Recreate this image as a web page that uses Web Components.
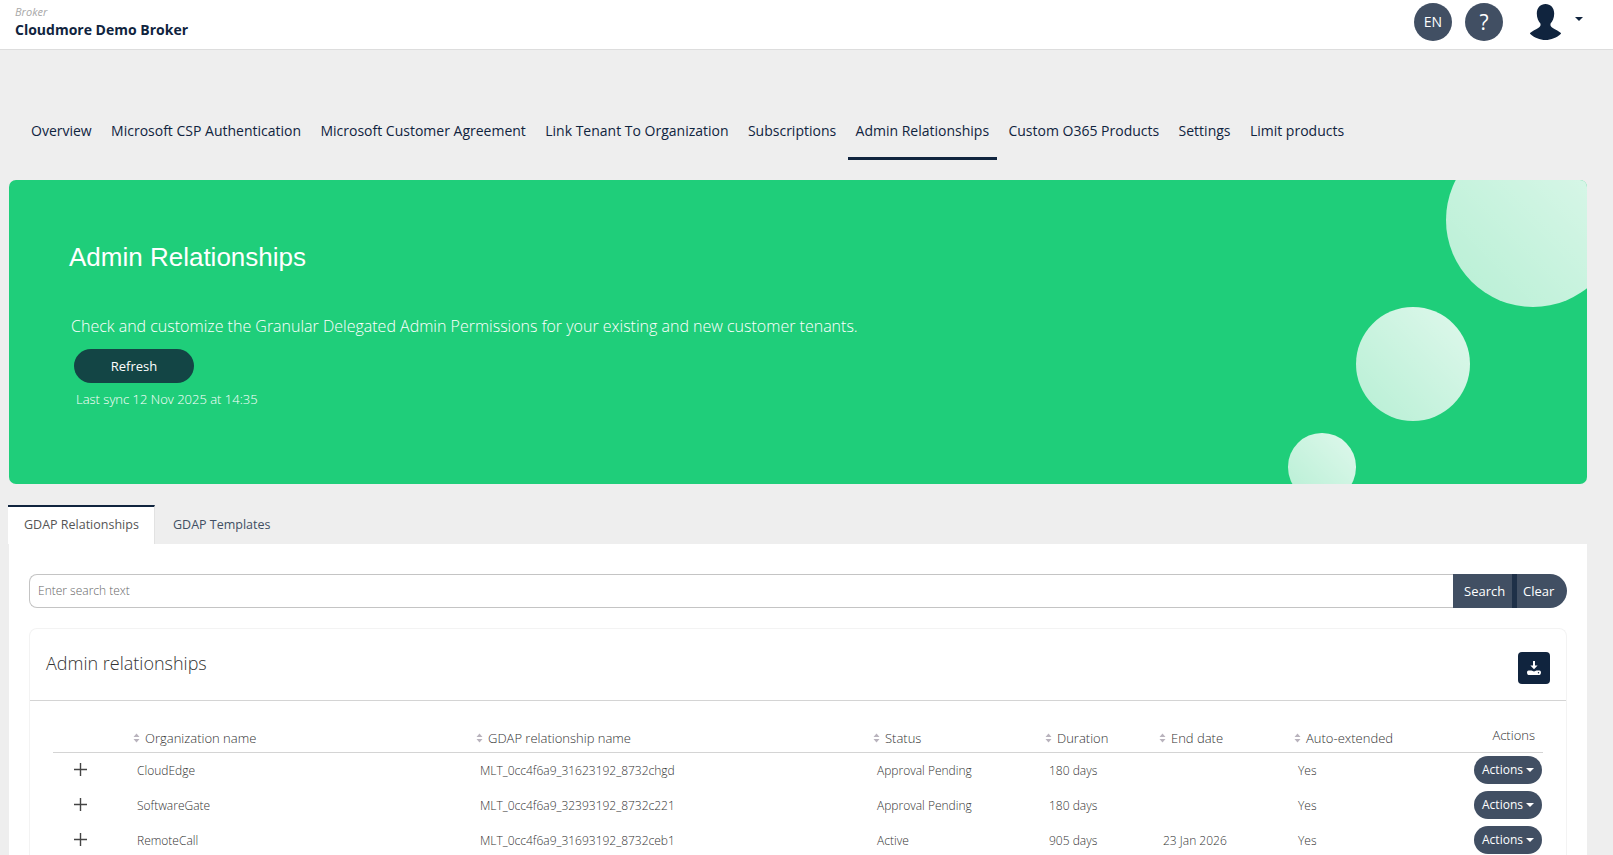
<!DOCTYPE html>
<html lang="en"><head><meta charset="utf-8"><title>Admin Relationships</title>
<style>
html,body{margin:0;padding:0;height:855px;overflow:hidden;background:#eee;font-family:"Open Sans","Liberation Sans",sans-serif;color:#10243e}
</style></head><body>
<app-header></app-header>
<main-nav></main-nav>
<hero-banner></hero-banner>
<sub-tabs></sub-tabs>
<tab-panel>
  <search-bar></search-bar>
  <data-card>
    <relationship-row head></relationship-row>
    <relationship-row org="CloudEdge" rel="MLT_0cc4f6a9_31623192_8732chgd" status="Approval Pending" dur="180 days" end="" auto="Yes"></relationship-row>
    <relationship-row org="SoftwareGate" rel="MLT_0cc4f6a9_32393192_8732c221" status="Approval Pending" dur="180 days" end="" auto="Yes"></relationship-row>
    <relationship-row org="RemoteCall" rel="MLT_0cc4f6a9_31693192_8732ceb1" status="Active" dur="905 days" end="23 Jan 2026" auto="Yes"></relationship-row>
  </data-card>
</tab-panel>
<script>
function def(name, html){
  customElements.define(name, class extends HTMLElement{
    connectedCallback(){
      if(this.shadowRoot) return;
      const r=this.attachShadow({mode:'open'});
      r.innerHTML=typeof html==='function'?html(this):html;
    }
  });
}
def('app-header',`<style>
:host{display:flex;height:49px;background:#fff;border-bottom:1px solid #ddd;align-items:stretch;justify-content:space-between;padding:0 0 0 15px}
.b{display:flex;flex-direction:column;padding-top:6px}
.s{font-size:11px;line-height:12px;font-style:italic;color:#a8a8a8;font-weight:400}
.t{font-size:14px;line-height:19px;font-weight:700;color:#10243e;margin-top:2px}
.r{display:flex;align-items:center;padding:0 30px 7px 0;margin-top:1px}
.c{width:38px;height:38px;border-radius:50%;background:#414f63;color:#fff;display:flex;align-items:center;justify-content:center;font-size:14px;margin-right:13px}
.q{font-size:21px;font-weight:500;margin-right:27px}
svg{display:block}
.caret{width:0;height:0;border:4px solid transparent;border-top:4px solid #10243e;border-bottom:0;margin:0 0 6px 14px}
</style>
<div class="b"><span class="s">Broker</span><span class="t">Cloudmore Demo Broker</span></div>
<div class="r"><span class="c">EN</span><span class="c q">?</span>
<svg width="31" height="36" viewBox="0 0 31 36"><path fill="#10243e" d="M15.500 0c5 0 8.700 3.800 8.700 9.500 0 4.500-1.800 8-3.600 10-.5 2 .2 3.200 2.200 4.400 2.800 1.700 5.500 2.800 7.800 4.800.5.400.5.900.1 1.300C27 33.500 21 36 15.500 36S4 33.500.3 30c-.4-.4-.4-.9.1-1.300 2.300-2 5-3.100 7.800-4.800 2-1.200 2.700-2.400 2.200-4.400-1.800-2-3.600-5.500-3.600-10C6.800 3.800 10.500 0 15.500 0z"/></svg>
<span class="caret"></span></div>`);
const navs=['Overview','Microsoft CSP Authentication','Microsoft Customer Agreement','Link Tenant To Organization','Subscriptions','Admin Relationships','Custom O365 Products','Settings','Limit products'];
def('main-nav',`<style>
:host{display:flex;padding:0 0 0 23px;margin-top:60px;gap:3.4px;height:50px}
a{display:block;padding:0 8px;font-size:14px;line-height:42px;color:#10243e;box-sizing:border-box;height:50px;white-space:nowrap}
a.on{border-bottom:3px solid #10243e}
</style>`+navs.map(n=>`<a class="${n==='Admin Relationships'?'on':''}">${n}</a>`).join(''));
def('hero-banner',`<style>
:host{display:block;position:relative;overflow:hidden;margin:20px 26px 0 9px;height:304px;background:#1fce7a;border-radius:7px;color:#fff}
.in{display:flex;flex-direction:column;align-items:flex-start;padding:0 0 0 60px}
h1{margin:61px 0 0;font:400 26px/32px "Liberation Sans",Arial,sans-serif}
p{margin:42px 0 0 2px;font-size:16px;line-height:22px;font-weight:300}
button{margin:12px 0 0 5px;width:120px;height:34px;border:0;border-radius:17px;background:#134545;color:#fff;font:400 13px "Open Sans",sans-serif}
small{display:block;margin:7px 0 0 7px;font-size:13px;line-height:18px;font-weight:300}
i{position:absolute;border-radius:50%;background:linear-gradient(to top right,rgba(255,255,255,.68),rgba(255,255,255,.86))}
</style>
<i style="left:1437px;top:-47px;width:174px;height:174px"></i>
<i style="left:1346.500px;top:127px;width:114px;height:114px"></i>
<i style="left:1279px;top:253px;width:67.500px;height:67.500px"></i>
<div class="in"><h1>Admin Relationships</h1>
<p>Check and customize the Granular Delegated Admin Permissions for your existing and new customer tenants.</p>
<button>Refresh</button><small>Last sync 12 Nov 2025 at 14:35</small></div>`);
def('sub-tabs',`<style>
:host{display:flex;margin:21px 0 0 8px;height:39px}
a{display:flex;align-items:center;font-size:12.500px;color:#414f63;padding:0 15px 0 18px}
a.on{background:#fff;border-top:2px solid #10243e;width:147px;box-sizing:border-box;padding:0 0 2px 16px;color:#555;border-right:1px solid #e2e2e2}
</style><a class="on">GDAP Relationships</a><a>GDAP Templates</a>`);
def('tab-panel',`<style>
:host{display:block;margin:0 26px 0 9px;background:#fff;padding:30px 20px 0;height:311px;box-sizing:border-box;overflow:hidden}
</style><slot></slot>`);
def('search-bar',`<style>
:host{display:flex;height:34px}
.i{flex:1;border:1px solid #c4c4c4;border-right:0;border-radius:8px 0 0 8px;box-sizing:border-box;display:flex;align-items:center;padding:0 0 2px 8px;font-size:12px;color:#666;font-weight:300}
.b{display:flex;align-items:center;background:#414f63;color:#fff;font-size:13px}
.s{width:59px;padding-left:11px;box-sizing:border-box}
.d{width:5px;height:100%;background:#1e3048}
.c{width:50px;padding-left:6px;box-sizing:border-box;border-radius:0 17px 17px 0}
</style><div class="i">Enter search text</div><div class="b s">Search</div><div class="d"></div><div class="b c">Clear</div>`);
def('data-card',`<style>
:host{display:block;margin-top:20px;border:1px solid #f3f3f3;border-bottom:0;border-radius:8px 8px 0 0;box-sizing:border-box}
.h{display:flex;align-items:center;justify-content:space-between;height:71px;padding:0 16px;border-bottom:1px solid #d4d4d4}
h2{margin:0 0 4px;font-size:18px;font-weight:300;color:#333}
.d{width:32px;height:32px;border-radius:4px;background:#10243e;display:flex;align-items:center;justify-content:center;margin-top:6px}
.t{padding:0 22px 0 23px;margin-top:16px}
</style><div class="h"><h2>Admin relationships</h2><span class="d"><svg width="14" height="14" viewBox="0 0 14 14"><path fill="#fff" d="M6 0h2v4.500h2.600L7 8.300 3.400 4.500H6z"/><path fill="#fff" fill-rule="evenodd" d="M1.500 9.500h3L7 10.500l2.500-1h3c.8 0 1.500.9 1.500 2s-.7 2.500-1.500 2.500h-11C.7 14 0 12.600 0 11.500s.7-2 1.500-2zM11.500 11a.7.7 0 1 0 0 1.400.7.7 0 0 0 0-1.400z"/></svg></span></div><div class="t"><slot></slot></div>`);
const sort=`<svg width="7" height="10" viewBox="0 0 7 10"><path fill="#b9b3bd" d="M3.500 0.500l3 3.500H.5zM3.500 9.500L.5 6h6z"/></svg>`;
const cols=`display:grid;grid-template-columns:76px 343px 397px 172px 114px 135px 140px 113px;`;
def('relationship-row',el=>{
 const st=`<style>:host{${cols}font-size:12px;font-weight:300;color:#333}
 .c{height:34px;display:flex;align-items:center;padding-left:8px;white-space:nowrap;margin-bottom:1px;box-sizing:border-box}
 .x{padding:0 0 2px 21px}
 .x svg{display:block}
 .a{justify-content:flex-end;padding:0 1px 0 0}
 .btn{width:68px;height:28px;border-radius:14px;background:#414f63;color:#fff;font-size:12px;font-weight:400;display:flex;align-items:center;justify-content:center;gap:3px;padding-bottom:1px;box-sizing:border-box}
 .btn::after{content:"";border:4px solid transparent;border-top:4px solid #fff;border-bottom:0;margin-top:1px}
 .hd{font-size:13px;height:36px;padding:6px 0 0 4px;gap:5px;border-bottom:1px solid #d4d4d4;margin-bottom:0}
 .hr{justify-content:flex-end;padding:2px 8px 2px 0}
 </style>`;
 if(el.hasAttribute('head')){
  const h=['Organization name','GDAP relationship name','Status','Duration','End date','Auto-extended'];
  return st+`<div class="c hd"></div>`+h.map(t=>`<div class="c hd">${sort}<span>${t}</span></div>`).join('')+`<div class="c hd hr">Actions</div>`;
 }
 const g=k=>el.getAttribute(k)||'';
 return st+`<div class="c x"><svg width="13" height="13" viewBox="0 0 13 13"><path fill="#444" d="M5.800 0h1.400v5.800H13v1.400H7.200V13H5.800V7.200H0V5.800h5.800z"/></svg></div>`+['org','rel','status','dur','end','auto'].map(k=>`<div class="c">${g(k)}</div>`).join('')+`<div class="c a"><span class="btn">Actions</span></div>`;
});
</script>
</body></html>
